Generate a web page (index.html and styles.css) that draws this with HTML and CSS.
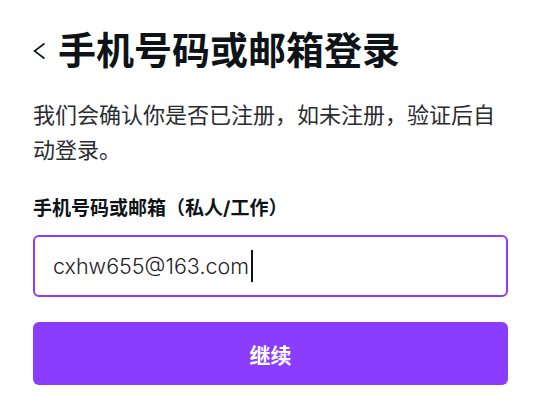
FILE: index.html
```html
<!DOCTYPE html>
<html lang="zh-CN">
<head>
    <meta charset="UTF-8">
    <title>手机号码或邮箱登录</title>
    <link rel="stylesheet" href="styles.css">
</head>
<body>

<div class="page">
    <div class="header">
        <a href="#" class="back">
            <svg width="13" height="18" viewBox="0 0 13 18">
                <polyline points="11.5,1.5 1.5,9 11.5,16.5" fill="none" stroke="#0e1318" stroke-width="1.6"/>
            </svg>
        </a>
        <h1>手机号码或邮箱登录</h1>
    </div>

    <p class="intro">我们会确认你是否已注册，如未注册，验证后自动登录。</p>

    <div class="label">手机号码或邮箱（私人/工作）</div>
    <div class="field">
        <span class="value">cxhw655@163.com</span><span class="caret"></span>
    </div>

    <button class="submit">继续</button>
</div>

</body>
</html>
```

FILE: styles.css
```css
body {
    margin: 0;
    font-family: Inter, "Noto Sans CJK SC", sans-serif;
    background-color: #ffffff;
    color: #0e1318;
}
.page {
    width: 475px;
    padding: 25px 28px 0 33px;
}
.header {
    display: flex;
    align-items: center;
    gap: 12px;
}
.back {
    display: flex;
    margin-top: 1px;
}
.header h1 {
    margin: 0;
    font-size: 38px;
    line-height: 50px;
    font-weight: 700;
}
.intro {
    margin: 23px 0 0;
    font-size: 22px;
    line-height: 35px;
    color: #2a2c30;
}
.label {
    margin-top: 29px;
    font-size: 19px;
    line-height: 24px;
    font-weight: 700;
}
.field {
    margin-top: 14px;
    height: 58px;
    border: 2px solid #8b3dff;
    border-radius: 6px;
    padding: 0 18px;
    display: flex;
    align-items: center;
}
.value {
    font-size: 21.5px;
    font-weight: 300;
    color: #1f2125;
}
.caret {
    width: 2px;
    height: 32px;
    margin-left: 2px;
    background-color: #0e1318;
}
.submit {
    margin-top: 25px;
    width: 100%;
    height: 63px;
    border: none;
    border-radius: 6px;
    background-color: #8b3dff;
    color: #ffffff;
    font-family: Inter, "Noto Sans CJK SC", sans-serif;
    font-size: 21px;
    font-weight: 700;
    cursor: pointer;
}
```
